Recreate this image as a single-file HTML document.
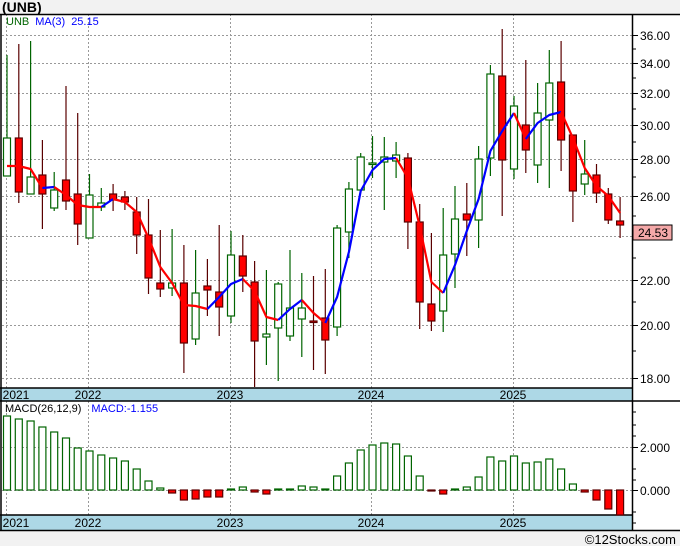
<!DOCTYPE html>
<html><head><meta charset="utf-8"><style>
html,body{margin:0;padding:0;background:#fff}
svg{display:block}
text{font-family:"Liberation Sans","DejaVu Sans",sans-serif}
</style></head><body>
<svg width="680" height="546" viewBox="0 0 680 546" xmlns="http://www.w3.org/2000/svg">
<rect x="0" y="0" width="680" height="546" fill="#fff"/>
<rect x="0" y="0" width="680" height="14" fill="#f2f2f2"/>
<text x="2" y="12" font-size="14" font-weight="bold" fill="#000">(UNB)</text>
<rect x="0" y="531" width="680" height="15" fill="#f2f2f2"/>
<text x="676" y="544" font-size="13" text-anchor="end" fill="#000">©12Stocks.com</text>
<!-- grid -->
<g stroke="#999" stroke-width="1" stroke-dasharray="2,2">
<line x1="2" y1="35.5" x2="632" y2="35.5"/><line x1="2" y1="63.5" x2="632" y2="63.5"/>
<line x1="2" y1="93.5" x2="632" y2="93.5"/><line x1="2" y1="125.5" x2="632" y2="125.5"/>
<line x1="2" y1="159.5" x2="632" y2="159.5"/><line x1="2" y1="196.5" x2="632" y2="196.5"/>
<line x1="2" y1="236.5" x2="632" y2="236.5"/><line x1="2" y1="280.5" x2="632" y2="280.5"/>
<line x1="2" y1="325.5" x2="632" y2="325.5"/><line x1="2" y1="378.5" x2="632" y2="378.5"/>
<line x1="2" y1="447.5" x2="632" y2="447.5"/><line x1="2" y1="490.5" x2="632" y2="490.5"/>
<line x1="6.5" y1="14" x2="6.5" y2="388"/><line x1="88.5" y1="14" x2="88.5" y2="388"/>
<line x1="230.5" y1="14" x2="230.5" y2="388"/><line x1="371.5" y1="14" x2="371.5" y2="388"/>
<line x1="513.5" y1="14" x2="513.5" y2="388"/>
<line x1="6.5" y1="401" x2="6.5" y2="515"/><line x1="88.5" y1="401" x2="88.5" y2="515"/>
<line x1="230.5" y1="401" x2="230.5" y2="515"/><line x1="371.5" y1="401" x2="371.5" y2="515"/>
<line x1="513.5" y1="401" x2="513.5" y2="515"/>
</g>
<!-- strips -->
<rect x="0" y="388" width="632" height="13" fill="#add8e6"/>
<rect x="0" y="515" width="632" height="15" fill="#add8e6"/>
<g font-size="12" fill="#000" text-anchor="middle">
<text x="16" y="399">2021</text><text x="88" y="399">2022</text><text x="230" y="399">2023</text><text x="371" y="399">2024</text><text x="513" y="399">2025</text>
<text x="16" y="527">2021</text><text x="88" y="527">2022</text><text x="230" y="527">2023</text><text x="371" y="527">2024</text><text x="513" y="527">2025</text>
</g>
<g stroke="#000" stroke-width="1.5" fill="none">
<line x1="0" y1="14.5" x2="680" y2="14.5"/>
<line x1="1" y1="14" x2="1" y2="530"/>
<line x1="632.5" y1="14" x2="632.5" y2="531"/>
<line x1="0" y1="388" x2="632" y2="388"/>
<line x1="0" y1="401" x2="680" y2="401"/>
<line x1="0" y1="515" x2="632" y2="515"/>
<line x1="0" y1="530.5" x2="680" y2="530.5"/>
</g>
<!-- axis ticks -->
<g stroke="#000" stroke-width="1">
<line x1="632" y1="35.5" x2="638" y2="35.5"/><line x1="632" y1="63.5" x2="638" y2="63.5"/><line x1="632" y1="93.5" x2="638" y2="93.5"/><line x1="632" y1="125.5" x2="638" y2="125.5"/><line x1="632" y1="159.5" x2="638" y2="159.5"/><line x1="632" y1="196.5" x2="638" y2="196.5"/><line x1="632" y1="280.5" x2="638" y2="280.5"/><line x1="632" y1="325.5" x2="638" y2="325.5"/><line x1="632" y1="378.5" x2="638" y2="378.5"/>
<line x1="632" y1="49" x2="636" y2="49"/><line x1="632" y1="78" x2="636" y2="78"/><line x1="632" y1="109" x2="636" y2="109"/><line x1="632" y1="142" x2="636" y2="142"/><line x1="632" y1="177" x2="636" y2="177"/><line x1="632" y1="216" x2="636" y2="216"/><line x1="632" y1="258" x2="636" y2="258"/><line x1="632" y1="302" x2="636" y2="302"/><line x1="632" y1="351" x2="636" y2="351"/>
<line x1="632" y1="447.5" x2="638" y2="447.5"/><line x1="632" y1="490.5" x2="638" y2="490.5"/>
<line x1="632" y1="412" x2="636" y2="412"/><line x1="632" y1="425" x2="636" y2="425"/><line x1="632" y1="436" x2="636" y2="436"/><line x1="632" y1="469" x2="636" y2="469"/><line x1="632" y1="480" x2="636" y2="480"/><line x1="632" y1="512" x2="636" y2="512"/><line x1="632" y1="523" x2="636" y2="523"/>
</g>
<g font-size="12" fill="#000">
<text x="640" y="40">36.00</text><text x="640" y="68">34.00</text><text x="640" y="98">32.00</text><text x="640" y="130">30.00</text><text x="640" y="164">28.00</text><text x="640" y="201">26.00</text><text x="640" y="285">22.00</text><text x="640" y="330">20.00</text><text x="640" y="383">18.00</text>
<text x="640" y="452">2.000</text><text x="640" y="495">0.000</text>
</g>
<rect x="633" y="225" width="39" height="15" fill="#f4a8a8" stroke="#000" stroke-width="1"/>
<text x="638" y="237" font-size="12" fill="#000">24.53</text>
<!-- legends -->
<text x="6" y="25" font-size="11"><tspan fill="#006400">UNB</tspan><tspan fill="#0000ff" dx="6">MA(3)</tspan><tspan fill="#0000ff" dx="6">25.15</tspan></text>
<text x="5" y="412" font-size="11"><tspan fill="#000">MACD(26,12,9)</tspan><tspan fill="#0000ff" dx="10">MACD:-1.155</tspan></text>
<!-- candles -->
<g stroke-width="1.2">
<g stroke="#006400" fill="#fff">
<line x1="7" y1="55" x2="7" y2="176"/><rect x="3.5" y="138" width="7" height="38"/>
<line x1="30.6" y1="41" x2="30.6" y2="194"/><rect x="27.1" y="177" width="7" height="17"/>
<line x1="54.2" y1="172" x2="54.2" y2="211"/><rect x="50.7" y="190" width="7" height="18"/>
<line x1="89.5" y1="174" x2="89.5" y2="238"/><rect x="86" y="195" width="7" height="43"/>
<line x1="101.3" y1="188" x2="101.3" y2="211"/><rect x="97.8" y="203" width="7" height="4"/>
<line x1="172.1" y1="229" x2="172.1" y2="296"/><rect x="168.6" y="283" width="7" height="5"/>
<line x1="195.6" y1="250" x2="195.6" y2="345"/><rect x="192.1" y="293" width="7" height="46"/>
<line x1="231" y1="231" x2="231" y2="323"/><rect x="227.5" y="255" width="7" height="61"/>
<line x1="266.4" y1="270" x2="266.4" y2="365"/><rect x="262.9" y="334" width="7" height="3"/>
<line x1="278.2" y1="282" x2="278.2" y2="381"/><rect x="274.7" y="284" width="7" height="44"/>
<line x1="290" y1="250" x2="290" y2="341"/><rect x="286.5" y="308" width="7" height="28"/>
<line x1="301.8" y1="273" x2="301.8" y2="357"/><rect x="298.3" y="308" width="7" height="11"/>
<line x1="337.1" y1="225" x2="337.1" y2="336"/><rect x="333.6" y="228" width="7" height="99"/>
<line x1="348.9" y1="182" x2="348.9" y2="258"/><rect x="345.4" y="189" width="7" height="43"/>
<line x1="360.7" y1="153" x2="360.7" y2="190"/><rect x="357.2" y="157" width="7" height="33"/>
<line x1="372.5" y1="136" x2="372.5" y2="178"/><rect x="369" y="163" width="7" height="1.5"/>
<line x1="384.3" y1="137" x2="384.3" y2="210"/><rect x="380.8" y="157" width="7" height="5"/>
<line x1="396.1" y1="142" x2="396.1" y2="178"/><rect x="392.6" y="155" width="7" height="6"/>
<line x1="443.2" y1="208" x2="443.2" y2="332"/><rect x="439.7" y="255" width="7" height="56"/>
<line x1="455" y1="186" x2="455" y2="288"/><rect x="451.5" y="219" width="7" height="35"/>
<line x1="478.6" y1="146" x2="478.6" y2="248"/><rect x="475.1" y="159" width="7" height="61"/>
<line x1="490.4" y1="65" x2="490.4" y2="176"/><rect x="486.9" y="74" width="7" height="84"/>
<line x1="514" y1="96" x2="514" y2="179"/><rect x="510.5" y="106" width="7" height="63"/>
<line x1="537.6" y1="83" x2="537.6" y2="183"/><rect x="534.1" y="113" width="7" height="52"/>
<line x1="549.3" y1="50" x2="549.3" y2="188"/><rect x="545.8" y="83" width="7" height="37"/>
<line x1="584.7" y1="140" x2="584.7" y2="195"/><rect x="581.2" y="174" width="7" height="10"/>
</g>
<g stroke="#5a0000" fill="#ff0000">
<line x1="18.8" y1="44" x2="18.8" y2="203"/><rect x="15.3" y="138" width="7" height="54"/>
<line x1="42.4" y1="140" x2="42.4" y2="229"/><rect x="38.9" y="175" width="7" height="19"/>
<line x1="66" y1="86" x2="66" y2="210"/><rect x="62.5" y="180" width="7" height="21"/>
<line x1="77.7" y1="113" x2="77.7" y2="245"/><rect x="74.2" y="194" width="7" height="30"/>
<line x1="113.1" y1="184" x2="113.1" y2="211"/><rect x="109.6" y="194" width="7" height="6"/>
<line x1="124.9" y1="191" x2="124.9" y2="210"/><rect x="121.4" y="197" width="7" height="5"/>
<line x1="136.7" y1="197" x2="136.7" y2="254"/><rect x="133.2" y="212" width="7" height="23"/>
<line x1="148.5" y1="199" x2="148.5" y2="294"/><rect x="145" y="235" width="7" height="43"/>
<line x1="160.3" y1="230" x2="160.3" y2="297"/><rect x="156.8" y="283" width="7" height="6"/>
<line x1="183.9" y1="245" x2="183.9" y2="373"/><rect x="180.4" y="283" width="7" height="60"/>
<line x1="207.4" y1="259" x2="207.4" y2="316"/><rect x="203.9" y="286" width="7" height="4"/>
<line x1="219.2" y1="225" x2="219.2" y2="336"/><rect x="215.7" y="292" width="7" height="15"/>
<line x1="242.8" y1="235" x2="242.8" y2="292"/><rect x="239.3" y="256" width="7" height="20"/>
<line x1="254.6" y1="261" x2="254.6" y2="387"/><rect x="251.1" y="282" width="7" height="59"/>
<line x1="313.5" y1="276" x2="313.5" y2="370"/><rect x="310" y="321" width="7" height="1.5"/>
<line x1="325.3" y1="269" x2="325.3" y2="374"/><rect x="321.8" y="318" width="7" height="22"/>
<line x1="407.9" y1="153" x2="407.9" y2="249"/><rect x="404.4" y="158" width="7" height="64"/>
<line x1="419.7" y1="204" x2="419.7" y2="329"/><rect x="416.2" y="222" width="7" height="80"/>
<line x1="431.4" y1="233" x2="431.4" y2="331"/><rect x="427.9" y="304" width="7" height="17"/>
<line x1="466.8" y1="183" x2="466.8" y2="256"/><rect x="463.3" y="214" width="7" height="6"/>
<line x1="502.2" y1="29" x2="502.2" y2="216"/><rect x="498.7" y="76" width="7" height="84"/>
<line x1="525.8" y1="60" x2="525.8" y2="173"/><rect x="522.3" y="125" width="7" height="25"/>
<line x1="561.1" y1="41" x2="561.1" y2="171"/><rect x="557.6" y="82" width="7" height="58"/>
<line x1="572.9" y1="135" x2="572.9" y2="222"/><rect x="569.4" y="135" width="7" height="56"/>
<line x1="596.5" y1="164" x2="596.5" y2="203"/><rect x="593" y="175" width="7" height="18"/>
<line x1="608.3" y1="188" x2="608.3" y2="224"/><rect x="604.8" y="194" width="7" height="26"/>
<line x1="620.1" y1="197" x2="620.1" y2="238"/><rect x="616.6" y="221" width="7" height="4"/>
</g>
</g>
<!-- MA -->
<g fill="none" stroke-width="2.2" stroke-linejoin="round">
<polyline stroke="#ff0000" points="7,166 18.8,166 30.6,169 42.4,188"/>
<polyline stroke="#0000ff" points="42.4,188 54.2,187"/>
<polyline stroke="#ff0000" points="54.2,187 66,195 77.7,205 89.5,207 101.3,207"/>
<polyline stroke="#0000ff" points="101.3,207 113.1,199"/>
<polyline stroke="#ff0000" points="113.1,199 124.9,202 136.7,212 148.5,238 160.3,267 172.1,283 183.9,305 195.6,306 207.4,309"/>
<polyline stroke="#0000ff" points="207.4,309 219.2,297 231,284 242.8,279"/>
<polyline stroke="#ff0000" points="242.8,279 254.6,291 266.4,317 278.2,320"/>
<polyline stroke="#0000ff" points="278.2,320 290,309 301.8,300"/>
<polyline stroke="#ff0000" points="301.8,300 313.5,313 325.3,323"/>
<polyline stroke="#0000ff" points="325.3,323 337.1,297 348.9,252 360.7,191 372.5,170 384.3,159 396.1,158"/>
<polyline stroke="#ff0000" points="396.1,158 407.9,178 419.7,226 431.4,282 443.2,293"/>
<polyline stroke="#0000ff" points="443.2,293 455,265 466.8,231 478.6,199 490.4,151 502.2,131 514,113"/>
<polyline stroke="#ff0000" points="514,113 525.8,139"/>
<polyline stroke="#0000ff" points="525.8,139 537.6,123 549.3,115 561.1,112"/>
<polyline stroke="#ff0000" points="561.1,112 572.9,138 584.7,168 596.5,186 608.3,196 620.1,213"/>
</g>
<!-- MACD -->
<g stroke="#006400" stroke-width="1.2" fill="#fff">
<rect x="3.5" y="416" width="7" height="74"/><rect x="15.3" y="419" width="7" height="71"/><rect x="27.1" y="421" width="7" height="69"/><rect x="38.9" y="427" width="7" height="63"/><rect x="50.7" y="432" width="7" height="58"/><rect x="62.5" y="438" width="7" height="52"/><rect x="74.2" y="448" width="7" height="42"/><rect x="86" y="451" width="7" height="39"/><rect x="97.8" y="455" width="7" height="35"/><rect x="109.6" y="458" width="7" height="32"/><rect x="121.4" y="461" width="7" height="29"/><rect x="133.2" y="469" width="7" height="21"/><rect x="145" y="481" width="7" height="9"/><rect x="156.8" y="488" width="7" height="2"/>
<rect x="227.5" y="489" width="7" height="1"/><rect x="239.3" y="487" width="7" height="3"/><rect x="274.7" y="489" width="7" height="1"/><rect x="286.5" y="489" width="7" height="1"/><rect x="298.3" y="486" width="7" height="4"/><rect x="310" y="487" width="7" height="3"/><rect x="321.8" y="489" width="7" height="1"/>
<rect x="333.6" y="476" width="7" height="14"/><rect x="345.4" y="463" width="7" height="27"/><rect x="357.2" y="450" width="7" height="40"/><rect x="369" y="445" width="7" height="45"/><rect x="380.8" y="443" width="7" height="47"/><rect x="392.6" y="444" width="7" height="46"/><rect x="404.4" y="456" width="7" height="34"/><rect x="416.2" y="476" width="7" height="14"/>
<rect x="451.5" y="489" width="7" height="1"/><rect x="463.3" y="487" width="7" height="3"/><rect x="475.1" y="477" width="7" height="13"/><rect x="486.9" y="457" width="7" height="33"/><rect x="498.7" y="461" width="7" height="29"/><rect x="510.5" y="456" width="7" height="34"/><rect x="522.3" y="463" width="7" height="27"/><rect x="534.1" y="462" width="7" height="28"/><rect x="545.8" y="459" width="7" height="31"/><rect x="557.6" y="469" width="7" height="21"/><rect x="569.4" y="484" width="7" height="6"/>
</g>
<g stroke="#5a0000" stroke-width="1.2" fill="#ff0000">
<rect x="168.6" y="490" width="7" height="3"/><rect x="180.4" y="490" width="7" height="10"/><rect x="192.1" y="490" width="7" height="9"/><rect x="203.9" y="490" width="7" height="7"/><rect x="215.7" y="490" width="7" height="7"/>
<rect x="251.1" y="490" width="7" height="2"/><rect x="262.9" y="490" width="7" height="4"/>
<rect x="427.9" y="490" width="7" height="1"/><rect x="439.7" y="490" width="7" height="4"/>
<rect x="581.2" y="490" width="7" height="2"/><rect x="593" y="490" width="7" height="10"/><rect x="604.8" y="490" width="7" height="19"/><rect x="616.6" y="490" width="7" height="25"/>
</g>
</svg>
</body></html>
